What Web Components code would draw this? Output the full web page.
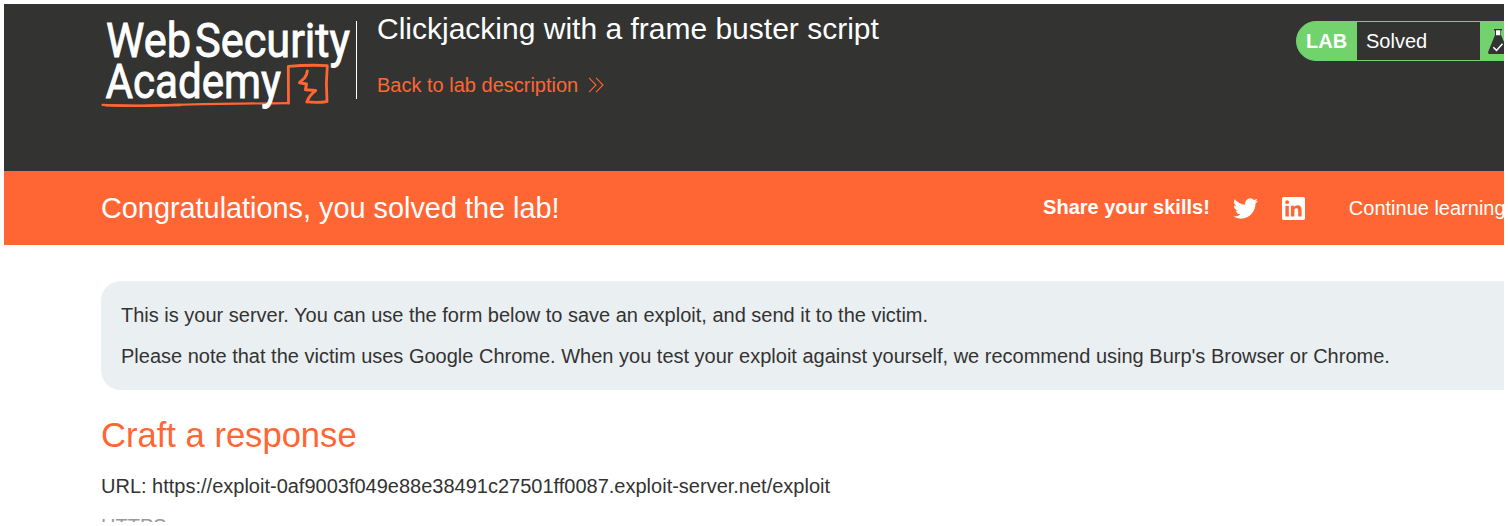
<!DOCTYPE html>
<html lang="en"><head><meta charset="utf-8"><title>Clickjacking with a frame buster script</title>
<style>
html,body{margin:0;background:#fff}
body{font-family:"Liberation Sans",Arial,sans-serif;font-size:20px;color:#333332;overflow:hidden}
</style></head><body>
<exploit-page></exploit-page>
<script>
function define(name, html){
  const t=document.createElement('template'); t.innerHTML=html;
  customElements.define(name, class extends HTMLElement{
    constructor(){super();this.attachShadow({mode:'open'}).append(t.content.cloneNode(true));}
  });
}
define('academy-logo',`<style>:host{display:block;width:254px;height:100px}svg{display:block;overflow:visible}text{font-family:Roboto,sans-serif;font-size:47.5px;font-weight:400;fill:#fff;stroke:#fff;stroke-width:.9px}</style>
<svg width="254" height="100" viewBox="101 12 254 100">
<g fill="none" stroke="#ff6633" stroke-linejoin="round" stroke-linecap="round">
<path d="M102.500 104.800 Q125 106.200 150 105.500 Q220 103.600 288.500 103.200" stroke-width="2.200"/>
<path d="M106 105.200 Q135 106.200 180 104.900" stroke-width="2.500"/>
<path d="M288.500 103.200 L288.300 66.400 Q308 64.600 327.300 65.600 Q325.600 83 327 101.500 Q318 103 307 101.900" stroke-width="2.800"/>
<path d="M307.300 71 Q307 75 304.500 78 L299.500 82.700 L306.500 83.900 L305.500 89.700 L315.700 90.600 Q309 95.500 307 101.900" stroke-width="3"/>
</g>
<text x="106" y="57" textLength="85" lengthAdjust="spacingAndGlyphs">Web</text>
<text x="195" y="57" textLength="155" lengthAdjust="spacingAndGlyphs">Security</text>
<text x="105.500" y="98" textLength="175.500" lengthAdjust="spacingAndGlyphs">Academy</text>
</svg>`);
define('back-link',`<style>:host{display:flex;align-items:center;color:#ff6633;line-height:24px;gap:10px}svg{display:block}</style>
<span><slot></slot></span><svg width="17" height="16" viewBox="0 0 17 16" fill="none" stroke="#ff6633" stroke-width="1.1"><path d="M1 .8 8 8 1 15.2M8 .8 15 8 8 15.2"/></svg>`);
define('lab-status',`<style>:host{display:flex;box-sizing:border-box;height:40px;width:248px;border:1px solid #71d26e;border-radius:20px;background:#71d26e;color:#fff;line-height:38px;overflow:hidden;flex:none}
b{width:60px;padding-left:9px;box-sizing:border-box}p{margin:0;background:#333332;width:123px;box-sizing:border-box;padding-left:9px}svg{margin:7px 0 0 8px}</style>
<b>LAB</b><p><slot></slot></p>
<svg width="22" height="26" viewBox="0 0 22 26"><path d="M6 0H14V1.500H13V6L20 22.500Q20.500 25 18.500 25H1.500Q-.5 25 .3 22.500L7 6V1.500H6Z" fill="#333332"/><path d="M8 1.200h4.300v5H8z" fill="#fff"/><path d="M5.300 18.300l3.200 3.100 6-6.600" fill="none" stroke="#fff" stroke-width="1.500"/></svg>`);
define('lab-header',`<style>:host{display:flex;background:#333332;height:167px;box-sizing:border-box;padding:8px 0 0 97px;color:#fff}
.title{margin-top:9px;margin-left:1px;height:78px;border-left:1px solid #fff;flex:none}
.inner{margin:-9px 0 0 20px;display:flex;flex-direction:column;gap:27px}
h2{font-size:30px;line-height:34px;font-weight:400;margin:0;white-space:nowrap}
lab-status{margin:9px -40px 0 auto}
</style>
<academy-logo></academy-logo><div class="title"><div class="inner"><h2>Clickjacking with a frame buster script</h2><back-link>Back to lab description</back-link></div></div><lab-status>Solved</lab-status>`);
define('share-icons',`<style>:host{display:flex;align-items:center;gap:24px}svg{display:block}</style>
<svg width="25" height="25" viewBox="0 0 24 24"><path fill="#fff" d="M23.950 4.570a10 10 0 0 1-2.820.770 4.960 4.960 0 0 0 2.160-2.720 9.900 9.900 0 0 1-3.120 1.180 4.920 4.920 0 0 0-8.380 4.480A13.930 13.930 0 0 1 1.640 3.160a4.920 4.920 0 0 0 1.520 6.570 4.900 4.900 0 0 1-2.230-.610v.060a4.920 4.920 0 0 0 3.950 4.830 5 5 0 0 1-2.210.080 4.940 4.940 0 0 0 4.600 3.420A9.870 9.870 0 0 1 0 19.540a14 14 0 0 0 7.550 2.210c9.050 0 14-7.500 14-13.980 0-.210 0-.420-.020-.630a9.940 9.940 0 0 0 2.420-2.570z"/></svg>
<svg width="23" height="23" viewBox="0 0 24 24"><path fill="#fff" d="M20.450 20.450h-3.550v-5.570c0-1.330-.030-3.040-1.850-3.040-1.850 0-2.140 1.450-2.140 2.940v5.670H9.350V9h3.410v1.560h.050c.480-.900 1.640-1.850 3.370-1.850 3.600 0 4.270 2.370 4.270 5.460zM5.340 7.430a2.060 2.060 0 1 1 0-4.130 2.060 2.060 0 0 1 0 4.130zM7.120 20.450H3.560V9h3.560zM22.220 0H1.770C.790 0 0 .770 0 1.730v20.540C0 23.230.790 24 1.770 24h20.450c.980 0 1.780-.770 1.780-1.730V1.730C24 .770 23.200 0 22.220 0z"/></svg>`);
define('solved-banner',`<style>:host{display:flex;align-items:center;background:#ff6633;height:74px;color:#fff;padding-left:97px;white-space:nowrap;overflow:hidden}
h3{font-weight:400;font-size:28.85px;line-height:34px;margin:0}
.share{display:flex;align-items:center;margin-left:auto;margin-right:-1.6px}b{margin:-2px 23.3px 0 0}.go{margin-left:43.7px}</style>
<h3>Congratulations, you solved the lab!</h3><div class="share"><b>Share your skills!</b><share-icons></share-icons><span class="go">Continue learning</span></div>`);
define('server-notice',`<style>:host{display:flex;flex-direction:column;gap:17px;box-sizing:border-box;height:109px;margin:36px 0 0 97px;padding:22px 20px;background:#eaeff2;border-radius:20px 0 0 20px;line-height:24px;white-space:nowrap}p{margin:0}</style>
<p>This is your server. You can use the form below to save an exploit, and send it to the victim.</p>
<p>Please note that the victim uses Google Chrome. When you test your exploit against yourself, we recommend using Burp's Browser or Chrome.</p>`);
define('response-form',`<style>:host{display:block;padding:25px 0 0 97px;white-space:nowrap}
h1{font-size:34.6px;line-height:40px;font-weight:400;color:#ff6633;margin:0}p{margin:19px 0 0;line-height:24px}label{display:block;margin-top:16px;line-height:24px;color:#999}</style>
<h1>Craft a response</h1><p>URL: https://exploit-0af9003f049e88e38491c27501ff0087.exploit-server.net/exploit</p><label>HTTPS</label>`);
define('exploit-page',`<style>:host{display:block;margin:4px;width:1500px;height:518px;overflow:hidden;background:#fff}</style>
<lab-header></lab-header><solved-banner></solved-banner><server-notice></server-notice><response-form></response-form>`);
</script></body></html>
